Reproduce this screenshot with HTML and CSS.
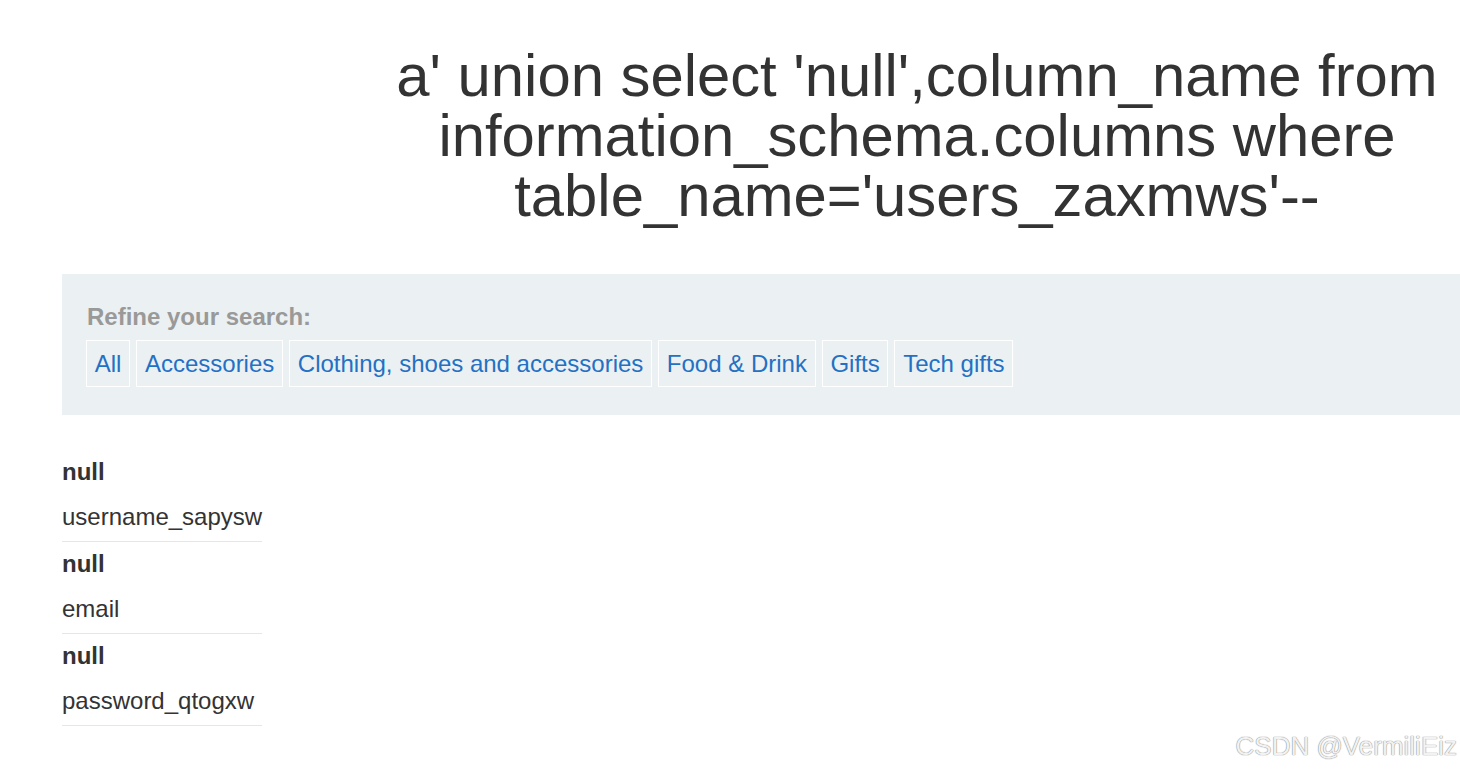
FILE: index.html
```html
<!DOCTYPE html>
<html>
<head>
<meta charset="utf-8">
<link rel="stylesheet" href="styles.css">
</head>
<body>
<div class="page">
  <h1 class="title">a' union select 'null',column_name from information_schema.columns where table_name='users_zaxmws'--</h1>
  <section class="filters">
    <div class="filters-label">Refine your search:</div>
    <div class="filters-list">
      <a class="filter" href="#">All</a>
      <a class="filter" href="#">Accessories</a>
      <a class="filter" href="#">Clothing, shoes and accessories</a>
      <a class="filter" href="#">Food &amp; Drink</a>
      <a class="filter" href="#">Gifts</a>
      <a class="filter" href="#">Tech gifts</a>
    </div>
  </section>
  <table class="results">
    <tbody>
      <tr><th>null</th></tr>
      <tr><td>username_sapysw</td></tr>
      <tr><th>null</th></tr>
      <tr><td>email</td></tr>
      <tr><th>null</th></tr>
      <tr><td>password_qtogxw</td></tr>
    </tbody>
  </table>
</div>
<div class="watermark">CSDN @VermiliEiz</div>
</body>
</html>
```

FILE: styles.css
```css
html, body {
  margin: 0;
  padding: 0;
  background: #ffffff;
  font-family: "Liberation Sans", Arial, sans-serif;
  color: #333333;
  overflow: hidden;
}

.page {
  padding-left: 62px;
  padding-top: 46px;
}

.title {
  margin: 0 0 48px 0;
  padding-left: 312px;
  font-size: 59.8px;
  line-height: 60px;
  font-weight: normal;
  text-align: center;
  color: #333333;
}

.filters {
  background: #ebf0f2;
  padding: 29px 25px 28px 25px;
}

.filters-label {
  font-size: 24px;
  line-height: 28px;
  font-weight: bold;
  color: #999999;
  margin-bottom: 9px;
}

.filters-list {
  display: flex;
  gap: 6px;
  margin-left: -1px;
}

.filter {
  display: block;
  border: 1px solid #ffffff;
  padding: 0 7.75px;
  font-size: 24px;
  line-height: 45px;
  color: #2470c4;
  text-decoration: none;
}

.results {
  margin-top: 35px;
  border-collapse: collapse;
  font-size: 24px;
  line-height: 28px;
}

.results th {
  text-align: left;
  font-weight: bold;
  padding: 8px 0 8px 0;
}

.results td {
  padding: 9px 0 10px 0;
  border-bottom: 1px solid #e6e6e6;
}

.watermark {
  position: absolute;
  right: 3px;
  bottom: 12px;
  font-size: 26px;
  line-height: 30px;
  color: #f2f2f2;
  text-shadow: 0 0 1px #8a8a8a, 0 0 1px #8a8a8a;
}
```
